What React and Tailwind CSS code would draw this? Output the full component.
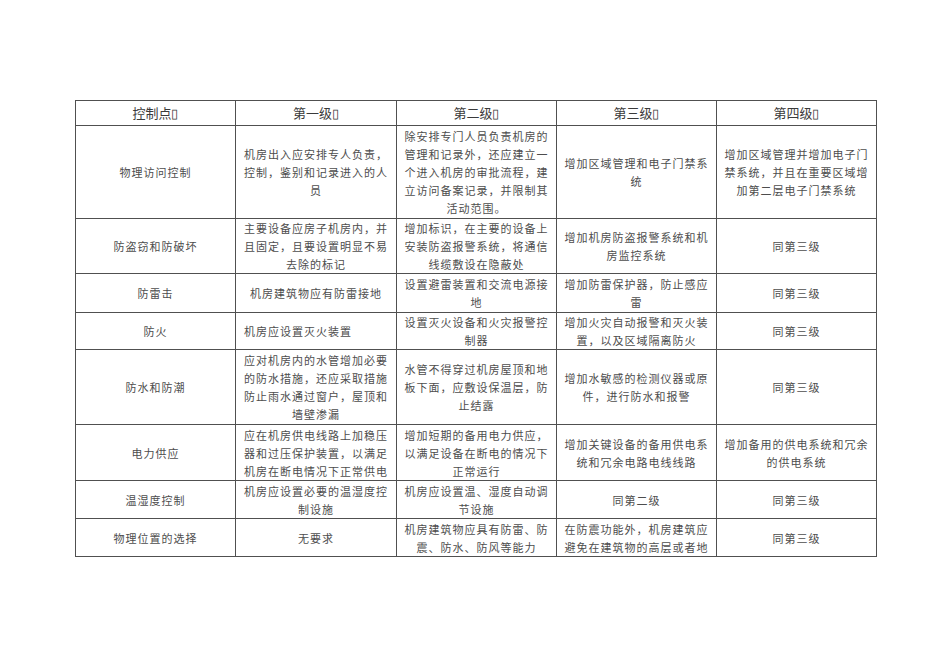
import React from 'react';

const headers = ['控制点▯', '第一级▯', '第二级▯', '第三级▯', '第四级▯'];

// each cell: lines of text; `left` flag for left aligned cells
const rows = [
    {
        h: 'h-[93px]',
        cells: [
            ['物理访问控制'],
            ['机房出入应安排专人负责，', '控制，鉴别和记录进入的人', '员'],
            ['除安排专门人员负责机房的', '管理和记录外，还应建立一', '个进入机房的审批流程，建', '立访问备案记录，并限制其', '活动范围。'],
            ['增加区域管理和电子门禁系', '统'],
            ['增加区域管理并增加电子门', '禁系统，并且在重要区域增', '加第二层电子门禁系统'],
        ],
    },
    {
        h: 'h-[55px]',
        cells: [
            ['防盗窃和防破坏'],
            ['主要设备应房子机房内，并', '且固定，且要设置明显不易', '去除的标记'],
            ['增加标识，在主要的设备上', '安装防盗报警系统，将通信', '线缆敷设在隐蔽处'],
            ['增加机房防盗报警系统和机', '房监控系统'],
            ['同第三级'],
        ],
    },
    {
        h: 'h-[39px]',
        cells: [
            ['防雷击'],
            ['机房建筑物应有防雷接地'],
            ['设置避雷装置和交流电源接', '地'],
            ['增加防雷保护器，防止感应', '雷'],
            ['同第三级'],
        ],
    },
    {
        h: 'h-[37px]',
        cells: [
            ['防火'],
            { left: true, lines: ['机房应设置灭火装置'] },
            ['设置灭火设备和火灾报警控', '制器'],
            ['增加火灾自动报警和灭火装', '置，以及区域隔离防火'],
            ['同第三级'],
        ],
    },
    {
        h: 'h-[75px]',
        cells: [
            ['防水和防潮'],
            ['应对机房内的水管增加必要', '的防水措施，还应采取措施', '防止雨水通过窗户，屋顶和', '墙壁渗漏'],
            ['水管不得穿过机房屋顶和地', '板下面，应敷设保温层，防', '止结露'],
            ['增加水敏感的检测仪器或原', '件，进行防水和报警'],
            ['同第三级'],
        ],
    },
    {
        h: 'h-[56px]',
        cells: [
            ['电力供应'],
            ['应在机房供电线路上加稳压', '器和过压保护装置，以满足', '机房在断电情况下正常供电'],
            ['增加短期的备用电力供应，', '以满足设备在断电的情况下', '正常运行'],
            ['增加关键设备的备用供电系', '统和冗余电路电线线路'],
            ['增加备用的供电系统和冗余', '的供电系统'],
        ],
    },
    {
        h: 'h-[38px]',
        cells: [
            ['温湿度控制'],
            ['机房应设置必要的温湿度控', '制设施'],
            ['机房应设置温、湿度自动调', '节设施'],
            ['同第二级'],
            ['同第三级'],
        ],
    },
    {
        h: 'h-[38px]',
        cells: [
            ['物理位置的选择'],
            ['无要求'],
            ['机房建筑物应具有防雷、防', '震、防水、防风等能力'],
            ['在防震功能外，机房建筑应', '避免在建筑物的高层或者地'],
            ['同第三级'],
        ],
    },
];

const font = { fontFamily: '"Noto Sans CJK SC", "Liberation Sans", sans-serif' };

const App = () => {
    return (
        <div className="min-h-screen w-[950px] h-[672px] bg-white pt-[100px] pl-[75px]" style={font}>
            <table className="table-fixed border-collapse w-[801px] text-[#4d4d4d]">
                <colgroup>
                    <col className="w-[160px]" />
                    <col className="w-[161px]" />
                    <col className="w-[160px]" />
                    <col className="w-[160px]" />
                    <col className="w-[160px]" />
                </colgroup>
                <thead>
                    <tr className="h-[25px]">
                        {headers.map((t) => (
                            <th key={t} className="border border-[#505050] p-0 font-normal text-[13px] leading-[18px] text-[#3a3a3a] text-center align-middle">
                                {t}
                            </th>
                        ))}
                    </tr>
                </thead>
                <tbody>
                    {rows.map((row, ri) => (
                        <tr key={ri} className={row.h}>
                            {row.cells.map((c, ci) => {
                                const left = !Array.isArray(c) && c.left;
                                const lines = Array.isArray(c) ? c : c.lines;
                                return (
                                    <td
                                        key={ci}
                                        className={`border border-[#505050] p-0 align-middle text-[11px] leading-[18px] tracking-[1px] whitespace-nowrap overflow-hidden ${left ? 'text-left pl-[8px]' : 'text-center'}`}
                                    >
                                        {lines.map((l, li) => (
                                            <div key={li}>{l}</div>
                                        ))}
                                    </td>
                                );
                            })}
                        </tr>
                    ))}
                </tbody>
            </table>
        </div>
    );
};

export default App;
